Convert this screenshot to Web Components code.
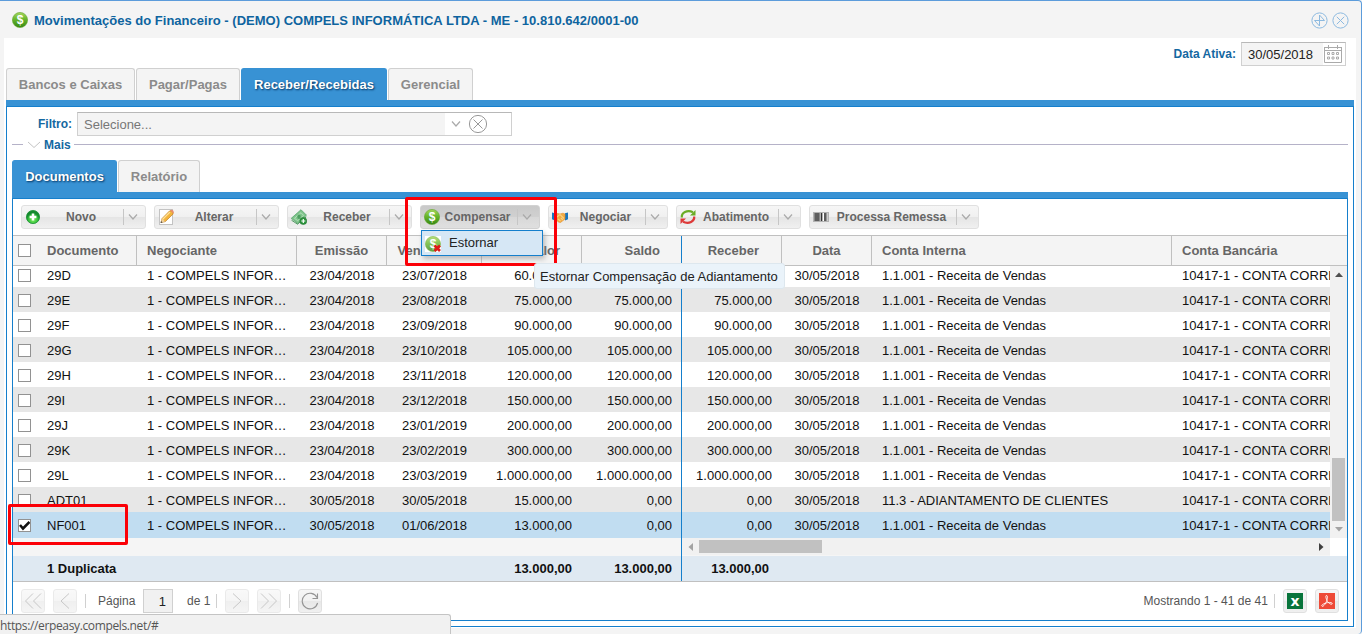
<!DOCTYPE html>
<html lang="pt-BR">
<head>
<meta charset="utf-8">
<title>Movimentações do Financeiro</title>
<style>
  html, body { margin: 0; height: 100%; overflow: hidden; }
  body { font: 13px/16px "Liberation Sans", Arial, sans-serif; color: #111; background: #f4f4f4; }
</style>
</head>
<body>
<erp-window heading="Movimentações do Financeiro - (DEMO) COMPELS INFORMÁTICA LTDA - ME - 10.810.642/0001-00">
  <date-bar label="Data Ativa:" value="30/05/2018"></date-bar>
  <tab-panel class="main">
    <tab-item slot="tabs" style="width:129px">Bancos e Caixas</tab-item>
    <tab-item slot="tabs" style="width:104px">Pagar/Pagas</tab-item>
    <tab-item slot="tabs" style="width:146px" active>Receber/Recebidas</tab-item>
    <tab-item slot="tabs" style="width:85px">Gerencial</tab-item>
    <filter-row label="Filtro:" placeholder="Selecione..." more="Mais"></filter-row>
    <tab-panel class="inner">
      <tab-item slot="tabs" style="width:105px" active>Documentos</tab-item>
      <tab-item slot="tabs" style="width:82px">Relatório</tab-item>
      <tool-bar>
        <split-button icon="add" style="width:125px">Novo</split-button>
        <split-button icon="edit" style="width:125px">Alterar</split-button>
        <split-button icon="money" style="width:125px">Receber</split-button>
        <split-button icon="coin" style="width:120px" pressed>Compensar</split-button>
        <split-button icon="hands" style="width:120px">Negociar</split-button>
        <split-button icon="swap" style="width:125px">Abatimento</split-button>
        <split-button icon="barcode" style="width:170px">Processa Remessa</split-button>
      </tool-bar>
      <doc-grid></doc-grid>
      <paging-bar></paging-bar>
    </tab-panel>
  </tab-panel>
</erp-window>
<menu-popup style="left:421px;top:230px">Estornar</menu-popup>
<mark-box style="left:405px;top:197px;width:152px;height:69px"></mark-box>
<mark-box style="left:8px;top:504px;width:120px;height:41px"></mark-box>
<tip-popup style="left:534px;top:263px">Estornar Compensação de Adiantamento</tip-popup>
<link-status>https://erpeasy.compels.net/#</link-status>

<script>
const svg = (w, h, body) =>
  `<svg width="${w}" height="${h}" viewBox="0 0 ${w} ${h}" fill="none">${body}</svg>`;

const COIN = `
  <defs><linearGradient id="cg" x2="0" y2="1"><stop stop-color="#a5d65c"/><stop offset=".45" stop-color="#68b62c"/><stop offset="1" stop-color="#358713"/></linearGradient></defs>
  <circle cx="8" cy="8" r="7.6" fill="url(#cg)" stroke="#5fa52a" stroke-width=".6"/>
  <text x="8" y="12.2" text-anchor="middle" font-family="Liberation Sans" font-weight="700" font-size="12" fill="#fff">$</text>`;

const ICONS = {
  coin: svg(16, 16, COIN),
  coinX: svg(16, 16, `<rect width="16" height="16" fill="#fff"/><g opacity=".8">${COIN}</g><path d="M9.5 9.500l5.500 5.500M15 9.500l-5.500 5.500" stroke="#e01818" stroke-width="2.600"/>`),
  add: svg(16, 16, `
    <defs><radialGradient id="ag" cy=".7"><stop stop-color="#7df25c"/><stop offset=".75" stop-color="#2fb83a"/><stop offset="1" stop-color="#14892f"/></radialGradient></defs>
    <circle cx="8" cy="8" r="6.600" fill="url(#ag)" stroke="#1b9133" stroke-width=".8"/>
    <path d="M8 4.600v6.800M4.600 8h6.800" stroke="#fff" stroke-width="2.500"/>`),
  edit: svg(16, 16, `
    <rect x="1.500" y=".5" width="13" height="15" fill="#fff" stroke="#c3c3c3"/>
    <path d="M3 13.500l1.100-4L11.500 2q1.500-1 2.900.4t.4 2.900L7.300 12.600z" fill="#f3b43c" stroke="#bb7a1e" stroke-width=".7"/>
    <path d="M4.700 10.200L12 3" stroke="#ffe298" stroke-width="1.200"/>
    <path d="M12.200 1.500l3 3 .6-.9q0-1.700-1.200-2.500t-2-.2z" fill="#e78e70"/>
    <path d="M3 13.500l1.100-4 2.900 3z" fill="#eed1a0"/><path d="M2.500 14l.6-2 1.400 1.500z" fill="#444"/>`),
  money: svg(16, 16, `
    <path d="M.3 9.300L10 .7l5.500 5.500-8.700 8.500z" fill="#7fc48b" stroke="#4c9e63" stroke-width=".7"/>
    <path d="M.5 11.200l6 4 8.800-7.400" stroke="#559b65"/>
    <path d="M3.500 9.300L10 3.700l2.500 2.700-5.800 5.300z" stroke="#bde3c2" stroke-width=".8"/>
    <ellipse cx="8" cy="7.700" rx="1.700" ry="2.200" fill="#4d9f60"/>
    <circle cx="12.300" cy="12" r="3.500" fill="#2b963c" stroke="#267535" stroke-width=".6"/>
    <path d="M12.300 10v4M10.300 12h4" stroke="#fff" stroke-width="1.200"/>`),
  hands: svg(16, 16, `
    <path d="M0 3.500l3 .8v7.200l-3-1.200zM16 3.500l-3 .8v7.200l3-1.200z" fill="#1876bf"/>
    <path d="M3 5l2.500-.5L8 5l3-.8 2 .8v5l-4.500 3.500-2-.5L3 10z" fill="#f1ac44" stroke="#e48c25" stroke-width=".6"/>
    <path d="M5 8l3-2.500 4 4M6 10l2.500 2M9 9l2 2" stroke="#f9d184" stroke-width="1.100"/>`),
  swap: svg(16, 16, `
    <path d="M1.800 8.500C1.300 3.800 7 .5 13 3.200" stroke="#6aac25" stroke-width="2.200"/>
    <path d="M15.500 1v5.500h-5.500z" fill="#6aac25"/>
    <path d="M14.200 7.500c.5 4.700-5.200 8-11.200 5.300" stroke="#dd3938" stroke-width="2.200"/>
    <path d="M.5 15V9.500H6z" fill="#dd3938"/>`),
  barcode: svg(16, 16, `
    <rect x=".5" y="3.500" width="15" height="9" fill="#ddd" stroke="#b3b3b3"/>
    <path d="M3 4v8M5 4v8M8.500 4v8M12 4v8" stroke="#333" stroke-width="1.500"/>
    <path d="M6.500 4v8M13.700 4v8M1.500 4v8" stroke="#888"/><path d="M10.500 4v8" stroke="#fff"/>`),
  chevron: svg(10, 8, `<path d="M1 1.500l4 4.500 4-4.500" stroke="#aaa" stroke-width="1.200"/>`),
  foldChevron: svg(14, 8, `<path d="M1 1l6 5.500L13 1" stroke="#c4c4c4"/>`),
  clear: svg(20, 20, `<circle cx="10" cy="10" r="8.600" stroke="#999"/><path d="M5.500 5.500l9 9M14.500 5.500l-9 9" stroke="#999"/>`),
  max: svg(17, 17, `<circle cx="8.500" cy="8.500" r="7.600" stroke="#8dbae0"/><path d="M8.500 14V3l5 5.500h-10l5 5.500" stroke="#8dbae0"/>`),
  close: svg(17, 17, `<circle cx="8.500" cy="8.500" r="7.600" stroke="#8dbae0"/><path d="M4.800 4.800l7.400 7.400M12.200 4.800l-7.400 7.400" stroke="#8dbae0"/>`),
  calendar: svg(18, 18, `
    <path d="M.5 3v14.500h17V3M0 2.500h18M0 5.500h18" stroke="#aaa"/><path d="M4.500 0v4M13.500 0v4" stroke="#aaa"/>
    <g stroke="#aaa"><path d="M3.500 7.500h2v2h-2zM8 7.500h2v2H8zM12.500 7.500h2v2h-2zM3.500 12h2v2h-2zM8 12h2v2H8zM12.500 12h2v2h-2z"/></g>`),
  first: svg(18, 18, `<path d="M9 1.500L1.500 9 9 16.500M17 1.500L9.500 9l7.500 7.500" stroke="#aaa"/>`),
  prev: svg(18, 18, `<path d="M13 1.500L5 9l8 7.500" stroke="#aaa"/>`),
  next: svg(18, 18, `<path d="M5 1.500L13 9l-8 7.500" stroke="#aaa"/>`),
  last: svg(18, 18, `<path d="M1 1.500L8.500 9 1 16.500M9 1.500L16.500 9 9 16.500" stroke="#aaa"/>`),
  refresh: svg(18, 18, `<path d="M16 5.500A7.800 7.800 0 1 0 16.600 11M16.500 1.500v5h-5" stroke="#949494" stroke-width="1.100"/>`),
  excel: svg(16, 16, `<rect width="16" height="16" fill="#08743b"/><text x="8" y="12.500" text-anchor="middle" font-family="DejaVu Sans" font-weight="700" font-size="14" fill="#fff">x</text>`),
  pdf: svg(16, 16, `<rect width="16" height="16" fill="#ee4a37"/><path d="M7.200 2.600c1.700-.6 1.400 2.500.6 5C6.900 10.300 4.700 13.700 3 13.300c-1.600-.8 2-3.100 5.700-3.700 3.100-.5 5 .3 4.400 1.300-.8 1.100-3.700-.7-5-3.100-.9-1.800-1.800-4.700-.9-5.200z" stroke="#fff" stroke-width=".9"/>`),
};

// Small helper: every element gets an open shadow root with its own style.
const define = (name, css, markup) =>
  customElements.define(name, class extends HTMLElement {
    constructor() {
      super();
      this.attachShadow({ mode: 'open' });
    }
    connectedCallback() {
      this.shadowRoot.innerHTML =
        `<style>*{box-sizing:border-box} svg{display:block;flex:none} ${css}</style>${markup(this)}`;
    }
  });

define('erp-window', `
  :host { display: flex; flex-direction: column; height: 634px; box-sizing: border-box; background: #f4f4f4;
    border-top: 1px solid #5c9cdb; border-right: 1px solid #5c9cdb; border-radius: 0 4px 4px 0; }
  header { display: flex; align-items: center; height: 37px; padding: 1px 12px 0; color: #0e649f; font-weight: 700; }
  h1 { flex: 1; margin: 1px 0 0 6px; font-size: 13px; letter-spacing: .012px; }
  .tools { display: flex; gap: 4px; }
  main { width: 1352px; height: 590px; margin-left: 4px; padding: 4px 2px 0; box-sizing: border-box; background: #fff; }
`, (el) => `
  <header>${ICONS.coin}<h1>${el.getAttribute('heading')}</h1><span class="tools">${ICONS.max}${ICONS.close}</span></header>
  <main><slot></slot></main>`);

define('date-bar', `
  :host { display: flex; justify-content: flex-end; align-items: center; height: 24px; padding-right: 8px; margin-bottom: 2px; }
  b { font-size: 12px; color: #1468a1; margin-right: 5px; letter-spacing: .02px; }
  .field { display: flex; align-items: center; width: 105px; height: 24px; border: 1px solid #d0d0d0; border-top-color: #b8b8b8; }
  .value { width: 81px; height: 22px; padding-left: 6px; line-height: 24px; background: #f4f4f4; margin-right: 1px; color: #222; }
`, (el) => `
  <b>${el.getAttribute('label')}</b>
  <div class="field"><span class="value">${el.getAttribute('value')}</span>${ICONS.calendar}</div>`);

define('tab-panel', `
  :host { display: flex; flex-direction: column; box-sizing: border-box; }
  :host(.main) { width: 1348px; height: 559px; }
  :host(.inner) { width: 1336px; height: 461px; margin-left: 5px; }
  nav { display: flex; gap: 1px; height: 32px; flex: none; }
  .bar { height: 6px; flex: none; background: #3892d4; }
  .body { flex: 1; min-height: 0; border: 1px solid #157fcc; }
`, () => `<nav><slot name="tabs"></slot></nav><div class="bar"></div><div class="body"><slot></slot></div>`);

define('tab-item', `
  :host { display: block; box-sizing: border-box; height: 32px; line-height: 32px; text-align: center; font-weight: 700;
    color: #8b8b8b; background: #f4f4f4; border: 1px solid #d0d0d0; border-bottom: 0; border-radius: 3px 3px 0 0; }
  :host([active]) { color: #fff; background: #3892d4; border-color: #3892d4; text-shadow: 1px 1px 2px #00315e; }
`, () => `<slot></slot>`);

define('filter-row', `
  :host { display: block; height: 53px; }
  .line { display: flex; padding: 5px 0 0 31px; align-items: center; }
  b { font-size: 12px; color: #1468a1; width: 39px; }
  .combo { display: flex; align-items: center; width: 435px; height: 24px; border: 1px solid #d0d0d0; border-top-color: #b8b8b8; }
  .text { width: 367px; height: 22px; line-height: 24px; padding-left: 6px; background: #f4f4f4; color: #777; margin-right: 6px; }
  .combo svg + svg { margin-left: 7px; }
  .more { display: flex; align-items: center; height: 16px; padding: 1px 5px 0; }
  .more b { width: auto; margin: 0 3px; }
  .rule { height: 1px; background: #b5b2c8; width: 11px; margin-right: 4px; }
  .rule.long { flex: 1; margin: 0; }
`, (el) => `
  <div class="line"><b>${el.getAttribute('label')}</b>
    <div class="combo"><span class="text">${el.getAttribute('placeholder')}</span>${ICONS.chevron}${ICONS.clear}</div></div>
  <div class="more"><span class="rule"></span>${ICONS.foldChevron}<b>${el.getAttribute('more')}</b><span class="rule long"></span></div>`);

define('tool-bar', `
  :host { display: flex; gap: 8px; height: 36px; padding: 6px 8px; box-sizing: border-box; }
`, () => `<slot></slot>`);

define('split-button', `
  :host { display: flex; align-items: center; box-sizing: border-box; height: 24px; flex: none; padding-left: 3px;
    border: 1px solid #e0e0e0; border-radius: 3px; background: linear-gradient(#f6f6f6, #f0f0f0 48%, #e5e5e5 52%, #f0f0f0);
    color: #666; font-size: 12px; font-weight: 700; }
  :host([pressed]) { background: linear-gradient(#c9c9c9, #d0d0d0 48%, #d8d8d8 52%, #e0e0e0); border-color: #d2d2d2; }
  .label { flex: 1; text-align: center; white-space: nowrap; margin-left: -2px; }
  .arrow { display: flex; align-items: center; width: 22px; height: 16px; padding-left: 4px; border-left: 1px solid #c6c6c6; }
`, (el) => `${ICONS[el.getAttribute('icon')]}<span class="label"><slot></slot></span><span class="arrow">${ICONS.chevron}</span>`);

const COLUMNS = ['Documento', 'Negociante', 'Emissão', 'Vencimento', 'Valor', 'Saldo', 'Receber', 'Data', 'Conta Interna', 'Conta Bancária'];
const DOCS = [
  ['29D', '23/04/2018', '23/07/2018', '60.000,00'],
  ['29E', '23/04/2018', '23/08/2018', '75.000,00'],
  ['29F', '23/04/2018', '23/09/2018', '90.000,00'],
  ['29G', '23/04/2018', '23/10/2018', '105.000,00'],
  ['29H', '23/04/2018', '23/11/2018', '120.000,00'],
  ['29I', '23/04/2018', '23/12/2018', '150.000,00'],
  ['29J', '23/04/2018', '23/01/2019', '200.000,00'],
  ['29K', '23/04/2018', '23/02/2019', '300.000,00'],
  ['29L', '23/04/2018', '23/03/2019', '1.000.000,00'],
  ['ADT01', '30/05/2018', '30/05/2018', '15.000,00', '0,00', '11.3 - ADIANTAMENTO DE CLIENTES'],
  ['NF001', '30/05/2018', '01/06/2018', '13.000,00', '0,00'],
];

const docRow = ([doc, issued, due, total, open = total, account = '1.1.001 - Receita de Vendas']) => {
  const on = doc === 'NF001';
  const cells = [doc, '1 - COMPELS INFORMATICA', issued, due, total, open, open, '30/05/2018', account, '10417-1 - CONTA CORRENTE'];
  return `<div class="row${on ? ' selected' : ''}"><check-box${on ? ' checked' : ''}></check-box>${cells.map((c) => `<span>${c}</span>`).join('')}</div>`;
};

define('check-box', `
  :host { display: block; box-sizing: border-box; width: 13px; height: 13px; margin-left: 5px; border: 1px solid #929292; background: #fff; align-self: center; }
`, (el) => el.hasAttribute('checked') ? svg(11, 11, `<path d="M1 5l3 3.500L10.500 2" stroke="#111" stroke-width="2.600"/>`) : '');

define('doc-grid', `
  :host { display: block; position: relative; height: 347px; border-bottom: 1px solid #c0c0c0; box-sizing: border-box; }
  .head, .row, .sum { display: grid; grid-template-columns: 24px 100px 160px 90px 95px 100px 100px 100px 90px 300px 1fr; }
  span { padding: 0 10px; white-space: nowrap; overflow: hidden; }
  .head { height: 31px; border: solid #c0c0c0; border-width: 1px 0; background: #f4f4f4; color: #666; font-weight: 700; line-height: 29px; }
  .head span { border-right: 1px solid #c0c0c0; text-align: center; }
  .head span:nth-child(2), .head span:nth-child(3), .head span:nth-child(n+10) { text-align: left; }
  .head span:nth-child(6), .head span:nth-child(7) { padding-right: 21px; }
  .head span:nth-child(8) { padding-right: 22px; }
  .head span:last-child { border: 0; }
  .view { display: grid; grid-template-columns: 1317px 17px; height: 272px; }
  .rows { overflow: hidden; display: flex; flex-direction: column; justify-content: flex-end; }
  .row { height: 25px; flex: none; line-height: 26px; padding-top: 1px; background: #fff; }
  .row:nth-child(even) { background: #e7e7e7; }
  .row.selected { height: 26px; background: #c1ddf1; }
  .row span:nth-child(3) { text-overflow: ellipsis; }
  .row span:nth-child(4), .row span:nth-child(5), .row span:nth-child(9) { padding: 0; text-align: center; }
  span:nth-child(n+6):nth-child(-n+8) { text-align: right; }
  .row span:last-child { padding-right: 0; letter-spacing: .07px; }
  .vbar { display: flex; flex-direction: column; align-items: center; background: #f1f1f1; }
  .vbar svg { margin-top: 6px; }
  .vbar i { width: 13px; height: 63px; margin-top: 181px; background: #c1c1c1; }
  .foot { display: flex; height: 18px; background: #f5f5f5; }
  .hbar { display: flex; align-items: center; width: 648px; height: 17px; margin-left: 669px; background: #f1f1f1; padding: 0 6px; }
  .hbar i { width: 123px; height: 13px; margin: 0 auto 0 6px; background: #c1c1c1; }
  .corner { flex: 1; background: #fff; }
  .sum { height: 25px; line-height: 25px; background: #dfe9f2; font-weight: 700; }
  .sum span:nth-child(8) { padding-right: 13px; }
  .lock { position: absolute; left: 668px; top: 1px; width: 1px; height: 345px; background: #157fcc; }
`, () => `
  <div class="head"><check-box></check-box>${COLUMNS.map((c) => `<span>${c}</span>`).join('')}</div>
  <div class="view">
    <div class="rows">${DOCS.map(docRow).join('')}</div>
    <div class="vbar">${svg(8, 5, '<path d="M0 5l4-4.500L8 5z" fill="#505050"/>')}<i></i>${svg(8, 5, '<path d="M0 0l4 4.500L8 0z" fill="#a3a3a3"/>')}</div>
  </div>
  <div class="foot"><div class="hbar">${svg(5, 8, '<path d="M5 0L.5 4 5 8z" fill="#a3a3a3"/>')}<i></i>${svg(5, 8, '<path d="M0 0l4.500 4L0 8z" fill="#404040"/>')}</div><div class="corner"></div></div>
  <div class="sum"><span></span><span>1 Duplicata</span><span></span><span></span><span></span><span>13.000,00</span><span>13.000,00</span><span>13.000,00</span></div>
  <div class="lock"></div>`);

define('icon-button', `
  :host { display: flex; align-items: center; justify-content: center; box-sizing: border-box; width: 24px; height: 24px; flex: none;
    border: 1px solid #e0e0e0; border-radius: 3px; background: linear-gradient(#f6f6f6, #f1f1f1 48%, #e8e8e8 52%, #f0f0f0); }
  :host([disabled]) { opacity: .65; }
`, (el) => ICONS[el.getAttribute('icon')]);

define('paging-bar', `
  :host { display: flex; align-items: center; height: 38px; padding: 0 8px; font-size: 12px; color: #555; box-sizing: border-box; }
  .sep { width: 1px; height: 14px; background: #d0d0d0; flex: none; }
  .page { width: 30px; height: 24px; border: 1px solid #d0d0d0; background: #f1f1f1; color: #222; font-size: 13px; line-height: 23px; text-align: right; padding-right: 6px; }
  .info { margin-left: auto; letter-spacing: .02px; }
`, () => `
  <icon-button icon="first" disabled></icon-button><icon-button icon="prev" disabled style="margin-left:8px"></icon-button>
  <span class="sep" style="margin:0 12px 0 8px"></span><span style="width:45px">Página</span><span class="page">1</span>
  <span style="width:29px;margin-left:14px">de 1</span><span class="sep" style="margin-right:8px"></span>
  <icon-button icon="next" disabled></icon-button><icon-button icon="last" disabled style="margin:0 8px"></icon-button>
  <span class="sep" style="margin-right:8px"></span><icon-button icon="refresh"></icon-button>
  <span class="info">Mostrando 1 - 41 de 41</span><span class="sep" style="margin:0 8px 0 6px"></span>
  <icon-button icon="excel"></icon-button><icon-button icon="pdf" style="margin-left:8px"></icon-button>`);

define('menu-popup', `
  :host { position: absolute; display: flex; box-sizing: border-box; width: 122px; height: 26px; padding: 5px 0 0 3px;
    border: 1px solid #157fcc; background: #d6e7f5; box-shadow: 2px 3px 5px #8888; }
  span { margin: -1px 0 0 8px; color: #222; }
`, () => `${ICONS.coinX}<span><slot></slot></span>`);

define('tip-popup', `
  :host { position: absolute; box-sizing: border-box; width: 251px; height: 26px; padding: 0 5px; line-height: 26px;
    white-space: nowrap; color: #222; background: #eaf3fa; border: 1px solid #dde7ee; border-radius: 3px; }
`, () => `<slot></slot>`);

define('mark-box', `
  :host { position: absolute; box-sizing: border-box; border: 3px solid #fb0007; border-radius: 2px; }
`, () => '');

define('link-status', `
  :host { position: absolute; left: 0; top: 614px; box-sizing: border-box; width: 451px; height: 20px; line-height: 21px;
    font-family: "Open Sans", "Noto Sans", sans-serif; font-size: 12px; letter-spacing: -.36px; color: #555; background: #f1f1f1;
    border: solid #c4c4c4; border-width: 1px 1px 0 0; border-top-right-radius: 3px; }
`, () => `<slot></slot>`);
</script>
</body>
</html>
